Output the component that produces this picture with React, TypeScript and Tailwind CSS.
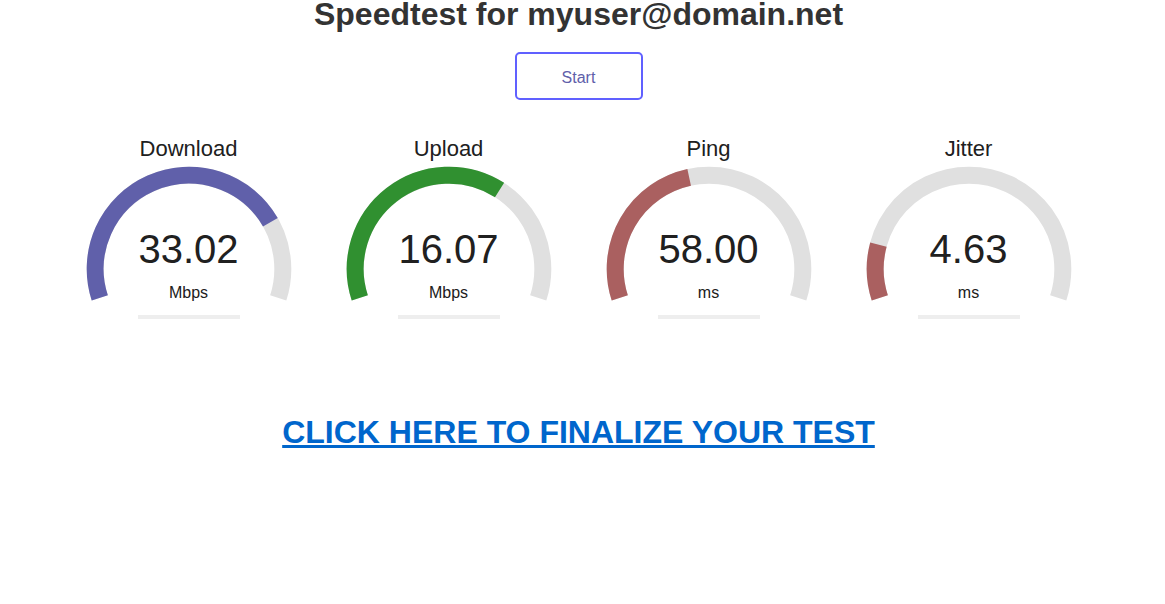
const gauges = [
  { name: "Download", value: "33.02", unit: "Mbps", amount: 0.7786, color: "#6060AA" },
  { name: "Upload", value: "16.07", unit: "Mbps", amount: 0.651, color: "#309030" },
  { name: "Ping", value: "58.00", unit: "ms", amount: 0.4435, color: "#AA6060" },
  { name: "Jitter", value: "4.63", unit: "ms", amount: 0.153, color: "#AA6060" },
]

// canvas-style angles: clockwise from +x, y pointing down
const CX = 130
const CY = 107
const R = 93.8
const START = -1.1 * Math.PI
const SWEEP = 1.2 * Math.PI

function arcPath(from: number, to: number) {
  const x1 = CX + R * Math.cos(from)
  const y1 = CY + R * Math.sin(from)
  const x2 = CX + R * Math.cos(to)
  const y2 = CY + R * Math.sin(to)
  const large = to - from > Math.PI ? 1 : 0
  return `M ${x1} ${y1} A ${R} ${R} 0 ${large} 1 ${x2} ${y2}`
}

function Gauge({ name, value, unit, amount, color }: (typeof gauges)[number]) {
  return (
    <div className="w-[260px] flex flex-col items-center">
      <div className="text-[22px] leading-[26px] text-[#202020]">{name}</div>
      <div className="relative w-[260px] h-[145px]">
        <svg width="260" height="145" viewBox="0 0 260 145">
          <path d={arcPath(START, START + SWEEP)} fill="none" stroke="#E0E0E0" strokeWidth="17" />
          <path d={arcPath(START, START + SWEEP * amount)} fill="none" stroke={color} strokeWidth="17" />
        </svg>
        <div className="absolute left-0 right-0 top-[67px] text-center text-[40px] leading-[40px] text-[#202020]">
          {value}
        </div>
        <div className="absolute left-0 right-0 top-[123px] text-center text-[16px] leading-[16px] text-[#202020]">
          {unit}
        </div>
      </div>
      <div className="mt-2 w-[102px] h-[4px] bg-[#EEEEEE]" />
    </div>
  )
}

export default function App() {
  return (
    <div className="w-[1157px] bg-white h-[604px] font-['Liberation_Sans',Arial,sans-serif] flex flex-col items-center">
      <h1 className="text-[32px] leading-[29px] font-bold text-[#333333]">
        Speedtest for myuser@domain.net
      </h1>

      <button className="mt-[23px] w-[128px] h-[48px] pt-[3px] border-[2.4px] border-[#6060FF] rounded-[5px] text-[16px] text-[#6060AA] flex items-center justify-center">
        Start
      </button>

      <div className="mt-[36px] flex">
        {gauges.map((g) => (
          <Gauge key={g.name} {...g} />
        ))}
      </div>

      <a href="#" className="mt-[97px] text-[32px] leading-[32px] font-bold text-[#0066CC] underline">
        CLICK HERE TO FINALIZE YOUR TEST
      </a>
    </div>
  )
}
